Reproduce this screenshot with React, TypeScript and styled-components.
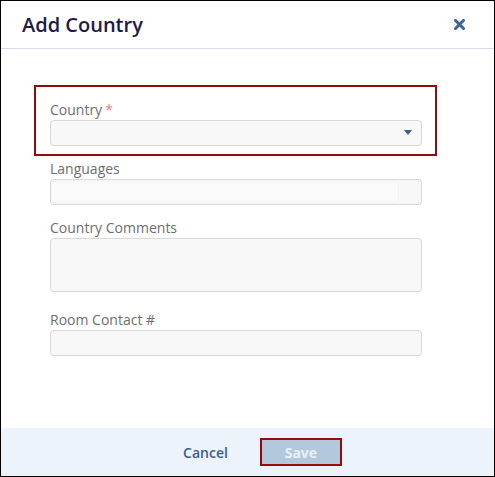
import React from "react";
import styled, { createGlobalStyle } from "styled-components";

const Global = createGlobalStyle`
  html, body { margin: 0; padding: 0; background: #ffffff; }
  body { font-family: "Open Sans", "Liberation Sans", sans-serif; }
  * { box-sizing: border-box; }
`;

const Dialog = styled.div`
  width: 495px;
  height: 477px;
  border: 1px solid #000000;
  background: #ffffff;
  display: flex;
  flex-direction: column;
`;

const Header = styled.div`
  height: 48px;
  flex: none;
  border-bottom: 1px solid #d3deee;
  display: flex;
  align-items: center;
  justify-content: space-between;
  padding: 0 29px 0 21px;
`;

const Title = styled.h1`
  margin: 0;
  font-size: 20px;
  font-weight: 600;
  color: #1d1a4c;
  line-height: 26px;
`;

const CloseButton = styled.button`
  border: none;
  background: none;
  padding: 0;
  width: 11px;
  height: 11px;
  display: flex;
  align-items: center;
  justify-content: center;
  cursor: pointer;
`;

const Body = styled.div`
  flex: 1;
  padding: 36px 57px 0 33px;
  display: flex;
  flex-direction: column;
`;

const Highlight = styled.div`
  border: 2px solid #930b0b;
  padding: 13px 13px 8px 14px;
`;

const Field = styled.div<{ $top?: number }>`
  display: flex;
  flex-direction: column;
  padding: 0 15px 0 16px;
  margin-top: ${(p) => p.$top ?? 0}px;
`;

const PlainField = styled.div`
  display: flex;
  flex-direction: column;
`;

const Label = styled.label`
  font-size: 14px;
  line-height: 20px;
  color: #6e6e6e;
`;

const Required = styled.span`
  color: #ef7f7f;
  margin-left: 3px;
`;

const Control = styled.div<{ $height: number }>`
  height: ${(p) => p.$height}px;
  background: #f8f8f8;
  border: 1px solid #d8d8d8;
  border-radius: 4px;
  position: relative;
  display: flex;
  align-items: center;
`;

const Arrow = styled.span`
  position: absolute;
  right: 9px;
  top: 9px;
  width: 0;
  height: 0;
  border-left: 4px solid transparent;
  border-right: 4px solid transparent;
  border-top: 5px solid #3b5d8e;
`;

const InnerInput = styled.div`
  height: 22px;
  width: 348px;
  background: #fafafa;
  border: 1px solid #f3f3f3;
  border-radius: 4px;
`;

const Footer = styled.div`
  height: 48px;
  flex: none;
  background: #edf3fa;
  display: flex;
  align-items: center;
  justify-content: center;
  gap: 2px;
`;

const CancelButton = styled.button`
  border: none;
  background: none;
  font-family: inherit;
  font-size: 14px;
  font-weight: 600;
  color: #3a5e92;
  padding: 0 30px;
  height: 28px;
  cursor: pointer;
`;

const SaveButton = styled.button`
  width: 82px;
  height: 28px;
  border: 2px solid #930b0b;
  background: #b3c8dc;
  color: #e9f0f7;
  font-family: inherit;
  font-size: 14px;
  font-weight: 700;
  padding: 0;
  cursor: default;
`;

export default function App() {
  return (
    <>
      <Global />
      <Dialog>
        <Header>
          <Title>Add Country</Title>
          <CloseButton aria-label="Close">
            <svg width="11" height="11" viewBox="0 0 11 11">
              <path d="M1.5 1.5 L9.5 9.5 M9.5 1.5 L1.5 9.5" stroke="#3d649b" strokeWidth="3" strokeLinecap="square" />
            </svg>
          </CloseButton>
        </Header>
        <Body>
          <Highlight>
            <PlainField>
              <Label>
                Country<Required>*</Required>
              </Label>
              <Control $height={26}>
                <Arrow />
              </Control>
            </PlainField>
          </Highlight>
          <Field $top={3}>
            <Label>Languages</Label>
            <Control $height={26}>
              <InnerInput />
            </Control>
          </Field>
          <Field $top={13}>
            <Label>Country Comments</Label>
            <Control $height={54} />
          </Field>
          <Field $top={18}>
            <Label>Room Contact #</Label>
            <Control $height={26} />
          </Field>
        </Body>
        <Footer>
          <CancelButton>Cancel</CancelButton>
          <SaveButton>Save</SaveButton>
        </Footer>
      </Dialog>
    </>
  );
}
